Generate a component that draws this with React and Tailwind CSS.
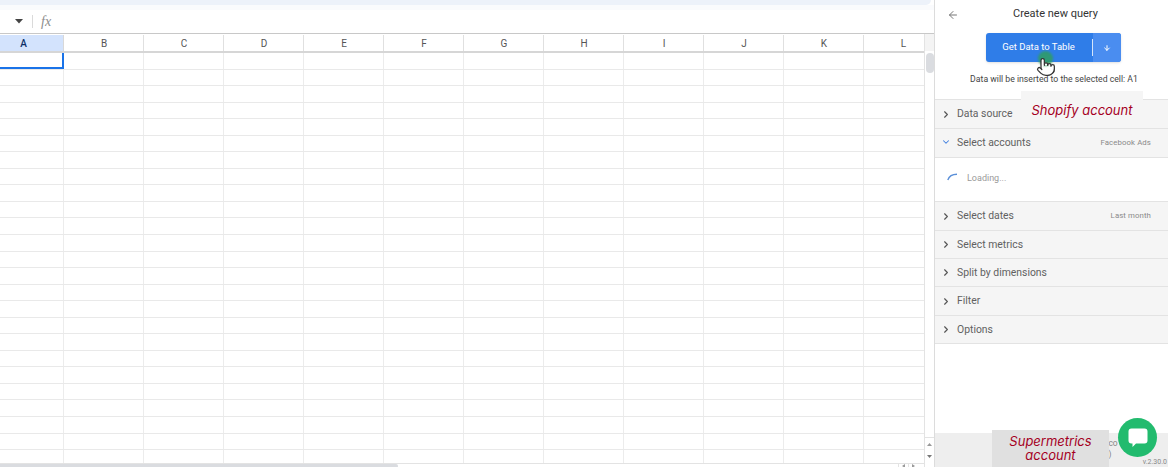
import { ArrowLeft, ArrowDown, ChevronRight, ChevronDown, Pointer } from 'lucide-react';

const COLS = ['B', 'C', 'D', 'E', 'F', 'G', 'H', 'I', 'J', 'K'];
const ROWS = Array.from({ length: 25 }, (_, i) => i);
const SECTIONS_BOTTOM = [
  { label: 'Select dates', value: 'Last month', h: 'h-[29px]' },
  { label: 'Select metrics', h: 'h-[28px]' },
  { label: 'Split by dimensions', h: 'h-[28px]' },
  { label: 'Filter', h: 'h-[29px]' },
  { label: 'Options', h: 'h-[28px]' },
];

function SectionRow({ label, value, open, h }) {
  return (
    <div className={`flex ${h} items-center border-b border-[#e3e3e3] bg-[#f5f5f5] pl-[5px] pr-[17px]`}>
      {open ? (
        <ChevronDown size={10} strokeWidth={2.5} className="mr-[5px] mt-[-3px] w-[12px] text-[#3f7fe0]" />
      ) : (
        <ChevronRight size={11} strokeWidth={2.5} className="mr-[5px] w-[12px] text-[#555]" />
      )}
      <span className="text-[10.4px] text-[#616161]">{label}</span>
      {value && <span className="ml-auto text-[7.8px] tracking-[0.1px] text-[#8a8a8a]">{value}</span>}
    </div>
  );
}

function Sheet() {
  return (
    <div className="flex h-[467px] w-[935px] shrink-0 flex-col border-r border-[#dcdcdc] bg-white">
      <div className="h-[5px] w-[931px] rounded-br-md bg-[#edf2fa]" />
      <div className="h-[5px] bg-[#fafbfd]" />
      <div className="flex h-[24px] items-center border-b border-[#c8c8c8] bg-white">
        <svg width="8" height="5" viewBox="0 0 8 5" className="ml-[15px]">
          <polygon points="0,0 8,0 4,4.5" fill="#444" />
        </svg>
        <div className="ml-[9px] h-[13px] w-px bg-[#dadada]" />
        <span className="ml-[8px] text-[14px] italic text-[#8d8d8d] [font-family:'Liberation_Serif',serif]">fx</span>
      </div>
      <div className="flex min-h-0 flex-1 overflow-hidden">
        <div className="w-[924px] shrink-0">
          <div className="flex h-[19px] border-b-2 border-[#d6d6d6] pt-[1px] text-[10px] text-[#555]">
            <div className="flex w-[64px] items-center justify-center border-r border-[#d8d8d8] bg-[#d3e3fd] font-medium text-[#0b2f66]">
              <span className="mr-[16px]">A</span>
            </div>
            {COLS.map((c) => (
              <div key={c} className="flex w-[80px] items-center justify-center border-r border-[#e0e0e0] pl-[1px]">{c}</div>
            ))}
            <div className="flex w-[60px] items-center justify-center pl-[19px]">L</div>
          </div>
          <div className="h-[410px] overflow-hidden">
            {ROWS.map((r) => (
              <div key={r} className="flex h-[16.55px] border-b border-[#e9e9e9]">
                <div className={r === 0 ? 'w-[64px] border-b-2 border-r-2 border-[#1a73e8]' : 'w-[64px] border-r border-[#ececec]'} />
                {COLS.map((c) => (
                  <div key={c} className="w-[80px] border-r border-[#ececec]" />
                ))}
              </div>
            ))}
          </div>
          <div className="flex h-[5px] border-t border-[#e3e3e3]">
            <div className="h-[4px] w-[398px] rounded-r bg-[#dadce0]" />
            <div className="ml-auto flex pr-[6px]">
              <div className="flex w-[10px] items-center justify-center border-l border-[#e3e3e3]">
                <svg width="3" height="4" viewBox="0 0 3 4"><polygon points="3,0 3,4 0,2" fill="#999" /></svg>
              </div>
              <div className="flex w-[10px] items-center justify-center border-l border-[#e3e3e3]">
                <svg width="3" height="4" viewBox="0 0 3 4"><polygon points="0,0 0,4 3,2" fill="#999" /></svg>
              </div>
            </div>
          </div>
        </div>
        <div className="flex w-[10px] flex-col border-l border-[#e3e3e3] bg-white">
          <div className="h-[17px] bg-[#f4f4f4]" />
          <div className="mt-[2px] h-[20px] w-[8px] self-center rounded bg-[#dadce0]" />
          <div className="mt-auto flex h-[13px] items-center justify-center border-t border-[#e3e3e3]">
            <svg width="5" height="3" viewBox="0 0 5 3"><polygon points="2.5,0 5,3 0,3" fill="#999" /></svg>
          </div>
          <div className="mb-[4px] flex h-[13px] items-center justify-center">
            <svg width="5" height="3" viewBox="0 0 5 3"><polygon points="0,0 5,0 2.5,3" fill="#777" /></svg>
          </div>
        </div>
      </div>
    </div>
  );
}

function Sidebar() {
  return (
    <div className="flex h-[467px] min-w-0 flex-1 flex-col bg-white [font-family:Roboto,sans-serif]">
      <div className="flex h-[29px] items-center pl-[12px]">
        <ArrowLeft size={12} className="text-[#777]" />
        <span className="ml-[54px] text-[11px] text-[#333]">Create new query</span>
      </div>
      <div className="mt-[4px] flex justify-center pl-[3px]">
        <div className="flex h-[29px] w-[135px] items-center rounded-[3px] bg-[#2f7de8] text-white shadow-sm">
          <span className="w-[106px] text-center text-[9.5px]">Get Data to Table</span>
          <div className="h-[17px] w-px bg-white/80" />
          <div className="flex h-full flex-1 items-center justify-center rounded-r-[3px] bg-[#4a8df0]">
            <ArrowDown size={8} strokeWidth={3} />
          </div>
        </div>
      </div>
      <div className="mt-[11px] pl-[5px] text-center text-[8.7px] text-[#444]">Data will be inserted to the selected cell: A1</div>
      <div className="mt-[13px] border-t border-[#e3e3e3]">
        <SectionRow label="Data source" h="h-[29px]" />
        <SectionRow label="Select accounts" value="Facebook Ads" open h="h-[29px]" />
        <div className="flex h-[44px] items-center border-b border-[#e3e3e3] bg-white pb-[2px] pl-[12px]">
          <svg width="11" height="8" viewBox="0 0 11 8" className="mb-[3px]">
            <path d="M0.8 7 C2 3.4 5 1.2 10 1.2" fill="none" stroke="#5a8fd8" strokeWidth="1.4" />
          </svg>
          <span className="ml-[9px] text-[9px] text-[#9a9a9a]">Loading...</span>
        </div>
        {SECTIONS_BOTTOM.map((s) => (
          <SectionRow key={s.label} {...s} />
        ))}
      </div>
      <div className="mt-auto flex h-[34px] justify-end bg-[#eeeeee] pr-[1px] text-[#888]">
        <div className="mr-[25px] pt-[5px] text-[8.5px] leading-[11px]">co<br />)</div>
        <span className="self-end text-[7px]">v.2.30.0</span>
      </div>
    </div>
  );
}

export default function App() {
  return (
    <div className="relative flex h-[467px] w-[1168px] overflow-hidden bg-white [font-family:Roboto,sans-serif]">
      <Sheet />
      <Sidebar />

      {/* video captions */}
      <div className="absolute top-[91px] left-[1021px] flex h-[36px] w-[122px] items-center justify-center bg-[#f5f5f5] pt-[3px] text-[13px] italic text-[#a5001f] [font-family:Inter,sans-serif]">
        Shopify account
      </div>
      <div className="absolute top-[430px] left-[992px] flex h-[37px] w-[117px] items-center justify-center bg-[#e0e0e0] pb-[2px] text-center text-[13px] leading-[14px] italic text-[#a5001f] [font-family:Inter,sans-serif]">
        <div>Supermetrics<br />account</div>
      </div>

      {/* click highlight and hand cursor */}
      <div className="absolute top-[51px] left-[1038px] size-[15px] rounded-full bg-[#2f9e5f]/85 blur-[1px]" />
      <Pointer size={20} strokeWidth={1.5} fill="#fff" className="absolute top-[57px] left-[1036px] text-[#333]" />

      {/* chat bubble */}
      <div className="absolute top-[418px] left-[1118px] flex size-[39px] items-center justify-center rounded-full bg-[#22bb6e]">
        <svg width="20" height="20" viewBox="0 0 20 20">
          <path d="M3.5 0.5 H16.5 A3 3 0 0 1 19.5 3.5 V12.5 A3 3 0 0 1 16.5 15.5 H8 L4.5 19 V15.5 H3.5 A3 3 0 0 1 0.5 12.5 V3.5 A3 3 0 0 1 3.5 0.5 Z" fill="#fff" />
        </svg>
      </div>
    </div>
  );
}
